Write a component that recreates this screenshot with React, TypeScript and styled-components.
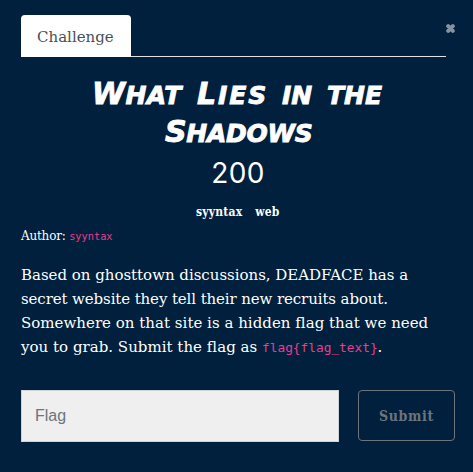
import React from 'react';
import styled, { createGlobalStyle } from 'styled-components';

const slab = '"DejaVu Serif", serif';

const GlobalStyle = createGlobalStyle`
  *, *::before, *::after { box-sizing: border-box; }
  body { margin: 0; background: #00203d; overflow: hidden; }
`;

const Modal = styled.main`
  width: 473px;
  height: 472px;
  padding: 15px 18px 0 21px;
  background: #00203d;
  color: #fff;
  font: 15px/24px ${slab};
`;

const Header = styled.header`
  display: flex;
  align-items: flex-start;
  height: 42px;
`;

const TabBar = styled.nav`
  flex: 0 0 425px;
  height: 42px;
  border-bottom: 1px solid #dee2e6;
`;

const Tab = styled.a`
  display: block;
  width: 110px;
  height: 42px;
  padding-left: 16px;
  border-radius: 4px 4px 0 0;
  background: #fff;
  color: #495057;
  line-height: 44px;
`;

const Close = styled.button`
  display: flex;
  margin: 9px 0 0;
  padding: 0;
  border: 0;
  background: none;
`;

const Title = styled.h2`
  display: grid;
  grid-template-rows: 38px 38px;
  margin: 18px 0 0;
  color: #fff;
  font: italic bold 25px/38px "DejaVu Sans", sans-serif;
  text-transform: uppercase;
`;

const TitleLine = styled.span<{ $indent: number }>`
  display: flex;
  align-items: baseline;
  padding-left: ${(p) => p.$indent}px;
  white-space: nowrap;
  -webkit-text-stroke: 0.9px #fff;
`;

const Word = styled.span<{ $width: number; $spacing?: number }>`
  flex: 0 0 ${(p) => p.$width}px;
  letter-spacing: ${(p) => p.$spacing ?? 0}px;
`;

const Initial = styled.span`
  font-size: 30px;
`;

const Points = styled.h3`
  margin: 1px 0 0;
  text-align: center;
  font: 400 28px/42px Inter, sans-serif;
  letter-spacing: 0.4px;
`;

const Tags = styled.div`
  display: flex;
  gap: 13px;
  margin-top: 10px;
  padding-left: 175px;
  font: bold condensed 12px/16px ${slab};
  letter-spacing: 0.2px;
`;

const Author = styled.p`
  margin: 7px 0 0;
  font-size: 12px;
  line-height: 18px;
  letter-spacing: -0.2px;
`;

const Code = styled.code<{ $size: number }>`
  color: #e83e8c;
  font: ${(p) => p.$size}px "DejaVu Sans Mono", monospace;
  letter-spacing: 0;
`;

const Description = styled.p`
  margin: 18px 0 0;
`;

const Line = styled.span<{ $spacing: number }>`
  display: block;
  height: 24px;
  white-space: nowrap;
  letter-spacing: ${(p) => p.$spacing}px;
`;

const Form = styled.form`
  display: flex;
  align-items: flex-start;
  gap: 19px;
  margin-top: 31px;
`;

const FlagInput = styled.input`
  width: 318px;
  height: 52px;
  padding: 0 13px;
  border: 1px solid #ced4da;
  border-radius: 0;
  background: #efefef;
  font: 16px "Liberation Sans", Arial, sans-serif;
  &::placeholder { color: #6c757d; opacity: 1; }
`;

const Submit = styled.button`
  width: 97px;
  height: 51px;
  padding: 0;
  border: 1px solid #6c757d;
  border-radius: 4px;
  background: transparent;
  color: #6c757d;
  font: bold condensed 14px ${slab};
  letter-spacing: 0.7px;
`;

export default function App() {
  return (
    <>
      <GlobalStyle />
      <Modal>
        <Header>
          <TabBar><Tab>Challenge</Tab></TabBar>
          <Close aria-label="Close">
            <svg width="9" height="9" viewBox="0 0 9 9">
              <path d="M2.2 2.2 6.8 6.8M6.8 2.2 2.2 6.8" stroke="#8592a0" strokeWidth="4" strokeLinecap="round" />
            </svg>
          </Close>
        </Header>
        <Title>
          <TitleLine $indent={71}>
            <Word $width={105} $spacing={0.4}><Initial>W</Initial>hat</Word>
            <Word $width={85} $spacing={1.9}><Initial>L</Initial>ies</Word>
            <Word $width={45}>in</Word>
            <Word $width={55}>the</Word>
          </TitleLine>
          <TitleLine $indent={144}>
            <Word $width={150} $spacing={-0.3}><Initial>S</Initial>hadows</Word>
          </TitleLine>
        </Title>
        <Points>200</Points>
        <Tags><span>syyntax</span><span>web</span></Tags>
        <Author>Author: <Code $size={10.3}>syyntax</Code></Author>
        <Description>
          <Line $spacing={-0.02}>Based on ghosttown discussions, DEADFACE has a</Line>
          <Line $spacing={-0.11}>secret website they tell their new recruits about.</Line>
          <Line $spacing={0.02}>Somewhere on that site is a hidden flag that we need</Line>
          <Line $spacing={0.02}>you to grab. Submit the flag as <Code $size={12.8}>{'flag{flag_text}'}</Code>.</Line>
        </Description>
        <Form>
          <FlagInput placeholder="Flag" />
          <Submit type="button">Submit</Submit>
        </Form>
      </Modal>
    </>
  );
}
